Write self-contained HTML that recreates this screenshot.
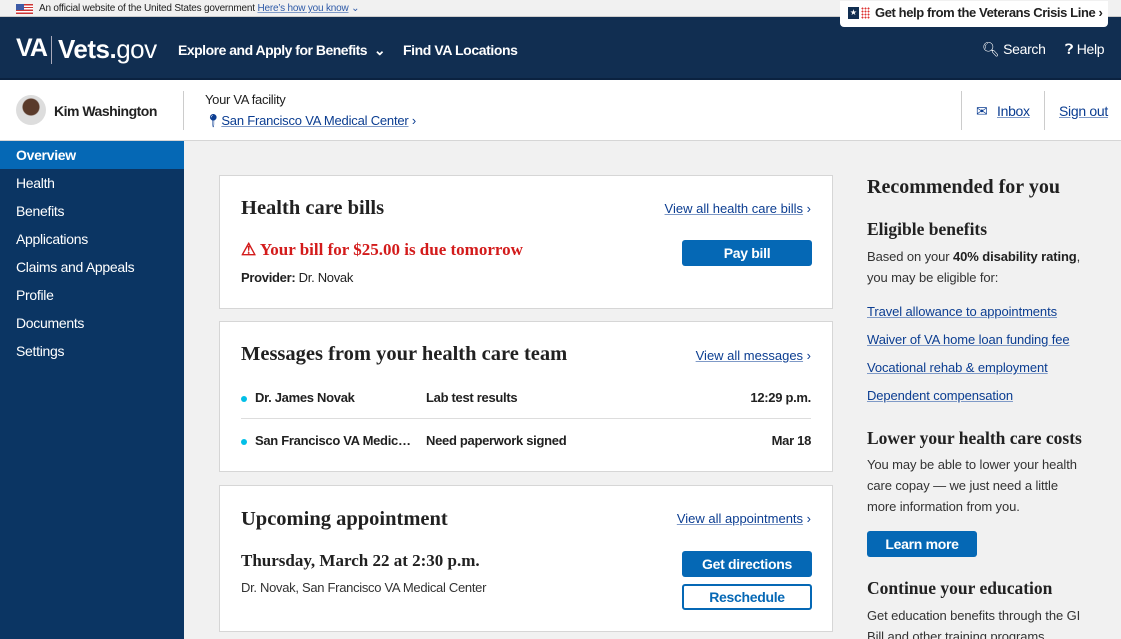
<!DOCTYPE html>
<html><head><meta charset="utf-8"><style>
*{box-sizing:border-box;margin:0;padding:0}
html,body{width:1121px;height:639px;overflow:hidden}
body{background:#f1f1f1;font-family:"Liberation Sans",sans-serif;color:#212121;position:relative}
.a{position:absolute;white-space:nowrap}
.s{font-family:"Liberation Serif",serif;font-weight:bold}
.n{font-size:13px;letter-spacing:-0.3px}
.lnk{color:#0b3d91;text-decoration:underline;text-decoration-color:#7f9ac7}
.vl{font-size:13px;color:#0b3d91}
.vl u{text-decoration-color:#7f9ac7}
.card{position:absolute;left:219px;width:614px;background:#fff;border:1px solid #d6d6d6}
.btn{position:absolute;background:#0568b5;color:#fff;font-weight:bold;font-size:14px;text-align:center;border-radius:3px;letter-spacing:-0.3px}
.side div{height:28px;line-height:28px;padding-left:16px;color:#fff;font-size:14px;letter-spacing:-0.3px}
</style></head><body>
<div class="a" style="left:0;top:0;width:1121px;height:17px;background:#f1f1f1;border-bottom:1px solid #ccc"></div>
<div class="a" style="left:16px;top:4px;width:17px;height:10px;background:repeating-linear-gradient(#c33 0 1.4px,#fff 1.4px 2.8px)"><div style="width:8px;height:6px;background:#3c5aa6"></div></div>
<div class="a" style="left:39px;top:3px;font-size:10px;letter-spacing:-0.2px">An official website of the United States government <span class="lnk" style="color:#2e5aa8">Here’s how you know</span> <span style="color:#2e5aa8">⌄</span></div>
<div class="a" style="left:0;top:17px;width:1121px;height:63px;background:#112e51;border-bottom:2px solid #0b2240"></div>
<div class="a" style="left:840px;top:1px;width:268px;height:26px;background:#fff;border-radius:0 0 4px 4px"></div>
<div class="a" style="left:848px;top:7px;width:11px;height:12px;background:#112e51;color:#fff;font-size:8px;line-height:12px;text-align:center">★</div>
<div class="a" style="left:861px;top:7px;width:9px;height:12px;background:radial-gradient(circle,#d33 0.9px,transparent 1.1px) 0 0/3px 3px"></div>
<div class="a" style="left:875px;top:5px;font-size:13px;font-weight:bold;letter-spacing:-0.4px">Get help from the Veterans Crisis Line ›</div>
<div class="a" style="left:16px;top:34px;color:#fff;font-size:25px;font-weight:bold;letter-spacing:-1px">VA</div>
<div class="a" style="left:51px;top:36px;width:1px;height:28px;background:#aab"></div>
<div class="a" style="left:58px;top:34px;color:#fff;font-size:26px;letter-spacing:-0.5px"><b>Vets.</b>gov</div>
<div class="a" style="left:178px;top:42px;color:#fff;font-size:14px;font-weight:bold;letter-spacing:-0.5px">Explore and Apply for Benefits &nbsp;⌄</div>
<div class="a" style="left:403px;top:42px;color:#fff;font-size:14px;font-weight:bold;letter-spacing:-0.4px">Find VA Locations</div>
<div class="a" style="left:982px;top:41px;color:#fff;font-size:14px;letter-spacing:-0.3px">🔍︎ Search</div>
<div class="a" style="left:1065px;top:41px;color:#fff;font-size:14px;letter-spacing:-0.3px">❓︎ Help</div>
<div class="a" style="left:0;top:80px;width:1121px;height:61px;background:#fff;border-bottom:1px solid #d6d6d6"></div>
<div class="a" style="left:16px;top:95px;width:30px;height:30px;border-radius:50%;background:radial-gradient(circle at 50% 40%,#5a3a2a 0 8px,#ddd 9px)"></div>
<div class="a" style="left:54px;top:103px;font-size:14px;font-weight:bold;letter-spacing:-0.5px">Kim Washington</div>
<div class="a" style="left:183px;top:91px;width:1px;height:39px;background:#ccc"></div>
<div class="a" style="left:205px;top:92px;font-size:13px;letter-spacing:-0.3px">Your VA facility</div>
<div class="a vl" style="left:205px;top:113px;letter-spacing:-0.2px">📍︎<u>San Francisco VA Medical Center</u> ›</div>
<div class="a" style="left:961px;top:91px;width:1px;height:39px;background:#ccc"></div>
<div class="a" style="left:1044px;top:91px;width:1px;height:39px;background:#ccc"></div>
<div class="a" style="left:976px;top:103px;font-size:14px;color:#0b3d91">✉︎</div>
<div class="a lnk" style="left:997px;top:103px;font-size:14px;letter-spacing:-0.3px">Inbox</div>
<div class="a lnk" style="left:1059px;top:103px;font-size:14px;letter-spacing:-0.3px">Sign out</div>
<div class="a side" style="left:0;top:141px;width:184px;height:498px;background:#0b3563">
<div style="background:#0568b5;font-weight:bold">Overview</div><div>Health</div><div>Benefits</div><div>Applications</div><div>Claims and Appeals</div><div>Profile</div><div>Documents</div><div>Settings</div></div>

<div class="card" style="top:175px;height:134px">
<div class="a s" style="left:21px;top:21px;font-size:20.5px">Health care bills</div>
<div class="a vl" style="right:21px;top:25px"><u>View all health care bills</u> ›</div>
<div class="a s" style="left:21px;top:64px;font-size:17px;color:#d31b1b">⚠ Your bill for $25.00 is due tomorrow</div>
<div class="a n" style="left:21px;top:94px"><b>Provider:</b> Dr. Novak</div>
<div class="btn" style="left:462px;top:64px;width:130px;height:26px;line-height:26px">Pay bill</div>
</div>
<div class="card" style="top:321px;height:151px">
<div class="a s" style="left:21px;top:21px;font-size:20.5px">Messages from your health care team</div>
<div class="a vl" style="right:21px;top:26px"><u>View all messages</u> ›</div>
<div class="a" style="left:21px;top:74px;width:6px;height:6px;border-radius:50%;background:#02bfe7"></div>
<div class="a n" style="left:35px;top:68px;font-weight:bold">Dr. James Novak</div>
<div class="a n" style="left:206px;top:68px;font-weight:bold">Lab test results</div>
<div class="a n" style="right:21px;top:68px;font-weight:bold">12:29 p.m.</div>
<div class="a" style="left:21px;top:96px;width:570px;height:1px;background:#ddd"></div>
<div class="a" style="left:21px;top:117px;width:6px;height:6px;border-radius:50%;background:#02bfe7"></div>
<div class="a n" style="left:35px;top:111px;font-weight:bold">San Francisco VA Medic…</div>
<div class="a n" style="left:206px;top:111px;font-weight:bold">Need paperwork signed</div>
<div class="a n" style="right:21px;top:111px;font-weight:bold">Mar 18</div>
</div>
<div class="card" style="top:485px;height:147px">
<div class="a s" style="left:21px;top:22px;font-size:20.5px">Upcoming appointment</div>
<div class="a vl" style="right:21px;top:25px"><u>View all appointments</u> ›</div>
<div class="a s" style="left:21px;top:65px;font-size:17px">Thursday, March 22 at 2:30 p.m.</div>
<div class="a n" style="left:21px;top:94px;color:#333">Dr. Novak, San Francisco VA Medical Center</div>
<div class="btn" style="left:462px;top:65px;width:130px;height:26px;line-height:26px">Get directions</div>
<div class="btn" style="left:462px;top:98px;width:130px;height:26px;line-height:22px;background:#fff;color:#0568b5;border:2px solid #0568b5">Reschedule</div>
</div>

<div class="a s" style="left:867px;top:176px;font-size:20px">Recommended for you</div>
<div class="a s" style="left:867px;top:219px;font-size:17.5px">Eligible benefits</div>
<div class="a" style="left:867px;top:246px;font-size:13px;line-height:21px;color:#333;letter-spacing:-0.1px">Based on your <b style="color:#212121">40% disability rating</b>,<br>you may be eligible for:</div>
<div class="a lnk" style="left:867px;top:304px;font-size:13px;letter-spacing:-0.1px">Travel allowance to appointments</div>
<div class="a lnk" style="left:867px;top:332px;font-size:13px;letter-spacing:-0.1px">Waiver of VA home loan funding fee</div>
<div class="a lnk" style="left:867px;top:360px;font-size:13px;letter-spacing:-0.1px">Vocational rehab &amp; employment</div>
<div class="a lnk" style="left:867px;top:388px;font-size:13px;letter-spacing:-0.1px">Dependent compensation</div>
<div class="a s" style="left:867px;top:428px;font-size:17.5px">Lower your health care costs</div>
<div class="a" style="left:867px;top:454px;font-size:13px;line-height:21px;color:#333;letter-spacing:-0.1px">You may be able to lower your health<br>care copay — we just need a little<br>more information from you.</div>
<div class="btn" style="left:867px;top:531px;width:110px;height:26px;line-height:26px">Learn more</div>
<div class="a s" style="left:867px;top:578px;font-size:17.5px">Continue your education</div>
<div class="a" style="left:867px;top:605px;font-size:13px;line-height:21px;color:#333;letter-spacing:-0.1px">Get education benefits through the GI<br>Bill and other training programs.</div>
</body></html>
